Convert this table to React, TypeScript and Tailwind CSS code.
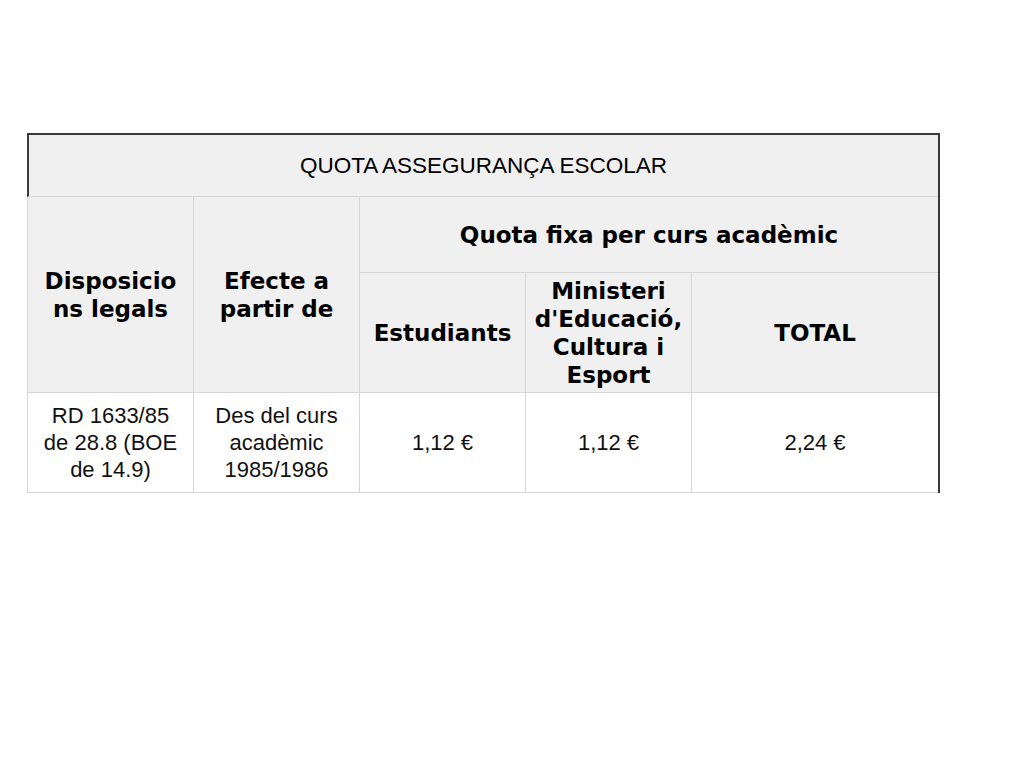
import React from "react";

const head = "bg-[#f0f0f0] border-l border-b border-[#d6d6d6] flex items-center justify-center text-center text-black font-['DejaVu_Sans',sans-serif] font-bold text-[23px] leading-[28px]";
const data = "bg-white border-l border-b border-[#d6d6d6] flex items-center justify-center text-center text-[#111] font-['Liberation_Sans',Arial,sans-serif] text-[22px] leading-[27px]";

const App = () => {
  return (
    <div className="w-[1024px] h-[768px] bg-white pt-[133px] pl-[27px]">
      <div className="w-[913px] border-t-2 border-r-2 border-[#3a3a3a] grid grid-cols-[166px_166px_166px_166px_247px] grid-rows-[62px_76px_120px_100px]">
        {/* title row */}
        <div className="col-span-5 bg-[#f0f0f0] border-l-2 border-l-[#3a3a3a] border-b border-[#d6d6d6] flex items-center justify-center font-['Liberation_Sans',Arial,sans-serif] text-[22.5px] text-black">
          QUOTA ASSEGURANÇA ESCOLAR
        </div>

        {/* header rows */}
        <div className={`${head} row-span-2`}>
          <span>
            Disposicio
            <br />
            ns legals
          </span>
        </div>
        <div className={`${head} row-span-2`}>
          <span>
            Efecte a
            <br />
            partir de
          </span>
        </div>
        <div className={`${head} col-span-3`}>Quota fixa per curs acadèmic</div>
        <div className={head}>Estudiants</div>
        <div className={head}>
          <span>
            Ministeri
            <br />
            d'Educació,
            <br />
            Cultura i
            <br />
            Esport
          </span>
        </div>
        <div className={head}>TOTAL</div>

        {/* data row */}
        <div className={data}>
          <span>
            RD 1633/85
            <br />
            de 28.8 (BOE
            <br />
            de 14.9)
          </span>
        </div>
        <div className={data}>
          <span>
            Des del curs
            <br />
            acadèmic
            <br />
            1985/1986
          </span>
        </div>
        <div className={data}>1,12 €</div>
        <div className={data}>1,12 €</div>
        <div className={data}>2,24 €</div>
      </div>
    </div>
  );
};

export default App;
